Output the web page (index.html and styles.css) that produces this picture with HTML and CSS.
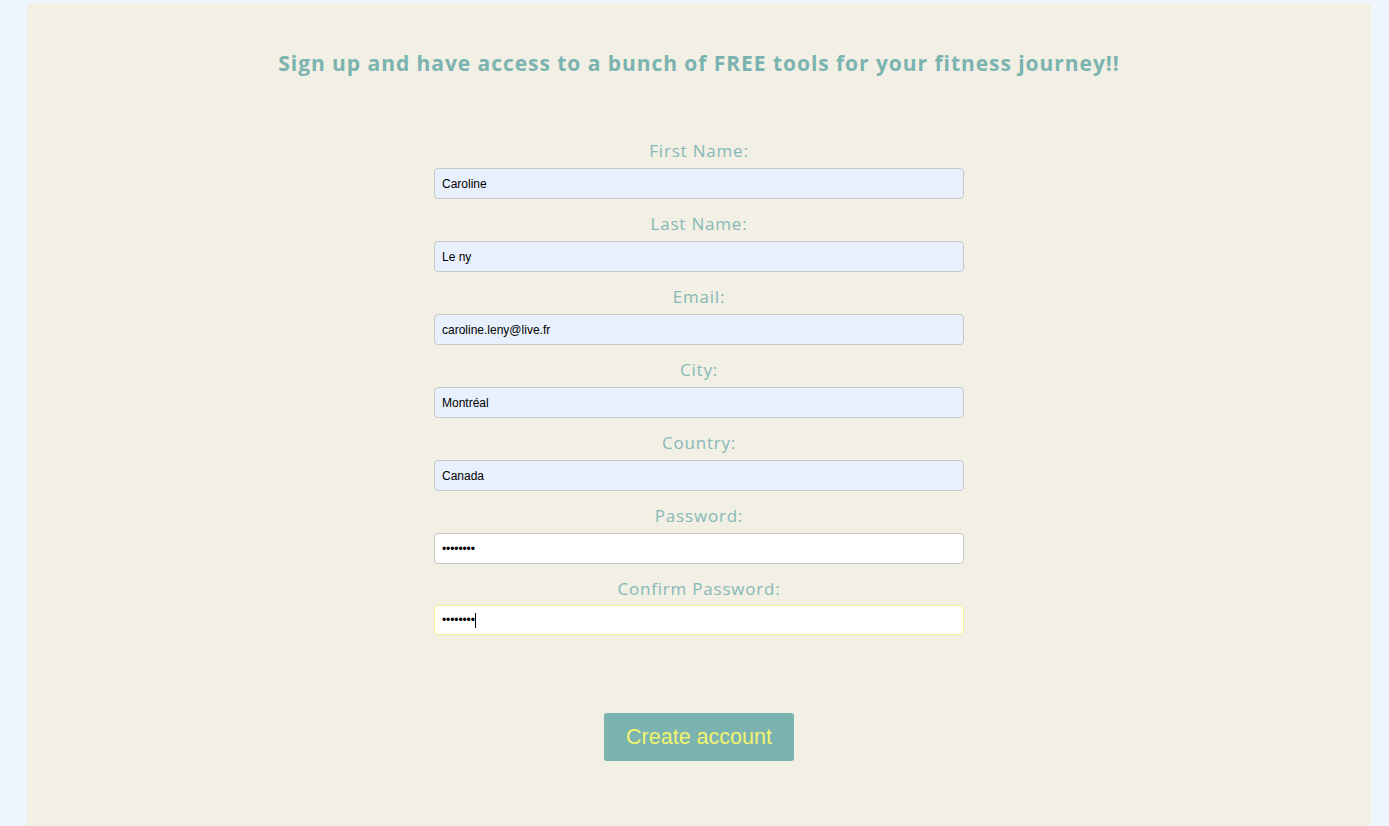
FILE: index.html
```html
<!DOCTYPE html>
<html>
<head>
<meta charset="utf-8">
<link rel="stylesheet" href="styles.css">
</head>
<body>
<main class="card">
  <h1 class="title">Sign up and have access to a bunch of FREE tools for your fitness journey!!</h1>
  <form class="form">
    <div class="field">
      <label class="label">First Name:</label>
      <div class="input autofill">Caroline</div>
    </div>
    <div class="field">
      <label class="label">Last Name:</label>
      <div class="input autofill">Le ny</div>
    </div>
    <div class="field">
      <label class="label">Email:</label>
      <div class="input autofill">caroline.leny@live.fr</div>
    </div>
    <div class="field">
      <label class="label">City:</label>
      <div class="input autofill">Montréal</div>
    </div>
    <div class="field">
      <label class="label">Country:</label>
      <div class="input autofill">Canada</div>
    </div>
    <div class="field">
      <label class="label">Password:</label>
      <div class="input pw">••••••••</div>
    </div>
    <div class="field field-focus">
      <label class="label">Confirm Password:</label>
      <div class="input pw focus">••••••••<span class="caret"></span></div>
    </div>
    <button type="button" class="btn">Create account</button>
  </form>
</main>
</body>
</html>
```
FILE: styles.css
```css
html, body {
  margin: 0;
  height: 100%;
}
body {
  background: #eef5fd;
  padding: 3px 18px 0 27px;
  box-sizing: border-box;
  overflow: hidden;
}
.card {
  background: #f2efe4;
  border-radius: 5px;
  min-height: 900px;
  display: flex;
  flex-direction: column;
  align-items: center;
  padding-top: 45px;
}
.title {
  margin: 0;
  font-family: "Open Sans", sans-serif;
  font-weight: 700;
  font-size: 21px;
  letter-spacing: 0.95px;
  line-height: 30px;
  color: #7ab3b0;
  text-align: center;
}
.form {
  margin-top: 61px;
  display: flex;
  flex-direction: column;
  align-items: center;
  width: 530px;
}
.field {
  display: flex;
  flex-direction: column;
  align-items: center;
  width: 100%;
  margin-bottom: 13px;
}
.label {
  font-family: "Open Sans", sans-serif;
  font-weight: 400;
  font-size: 17px;
  letter-spacing: 0.8px;
  line-height: 24px;
  color: #86b9b6;
  margin-bottom: 5px;
}
.field-focus .label {
  margin-bottom: 4px;
}
.input {
  box-sizing: border-box;
  width: 530px;
  height: 31px;
  border: 1px solid #c8c8c8;
  border-radius: 4px;
  padding: 0 7px;
  display: flex;
  align-items: center;
  font-family: "Liberation Sans", Arial, sans-serif;
  font-size: 12px;
  color: #000;
  background: #fff;
}
.autofill {
  background: #e8f0fe;
}
.pw {
  font-size: 12px;
  letter-spacing: -0.1px;
}
.focus {
  border-color: #f3f08a;
  height: 30px;
}
.caret {
  display: inline-block;
  width: 1px;
  height: 15px;
  background: #000;
}
.btn {
  margin-top: 65px;
  width: 190px;
  height: 48px;
  border: none;
  border-radius: 3px;
  background: #7ab3b0;
  color: #f3f36e;
  font-family: "Liberation Sans", Arial, sans-serif;
  font-size: 21.5px;
}
```
